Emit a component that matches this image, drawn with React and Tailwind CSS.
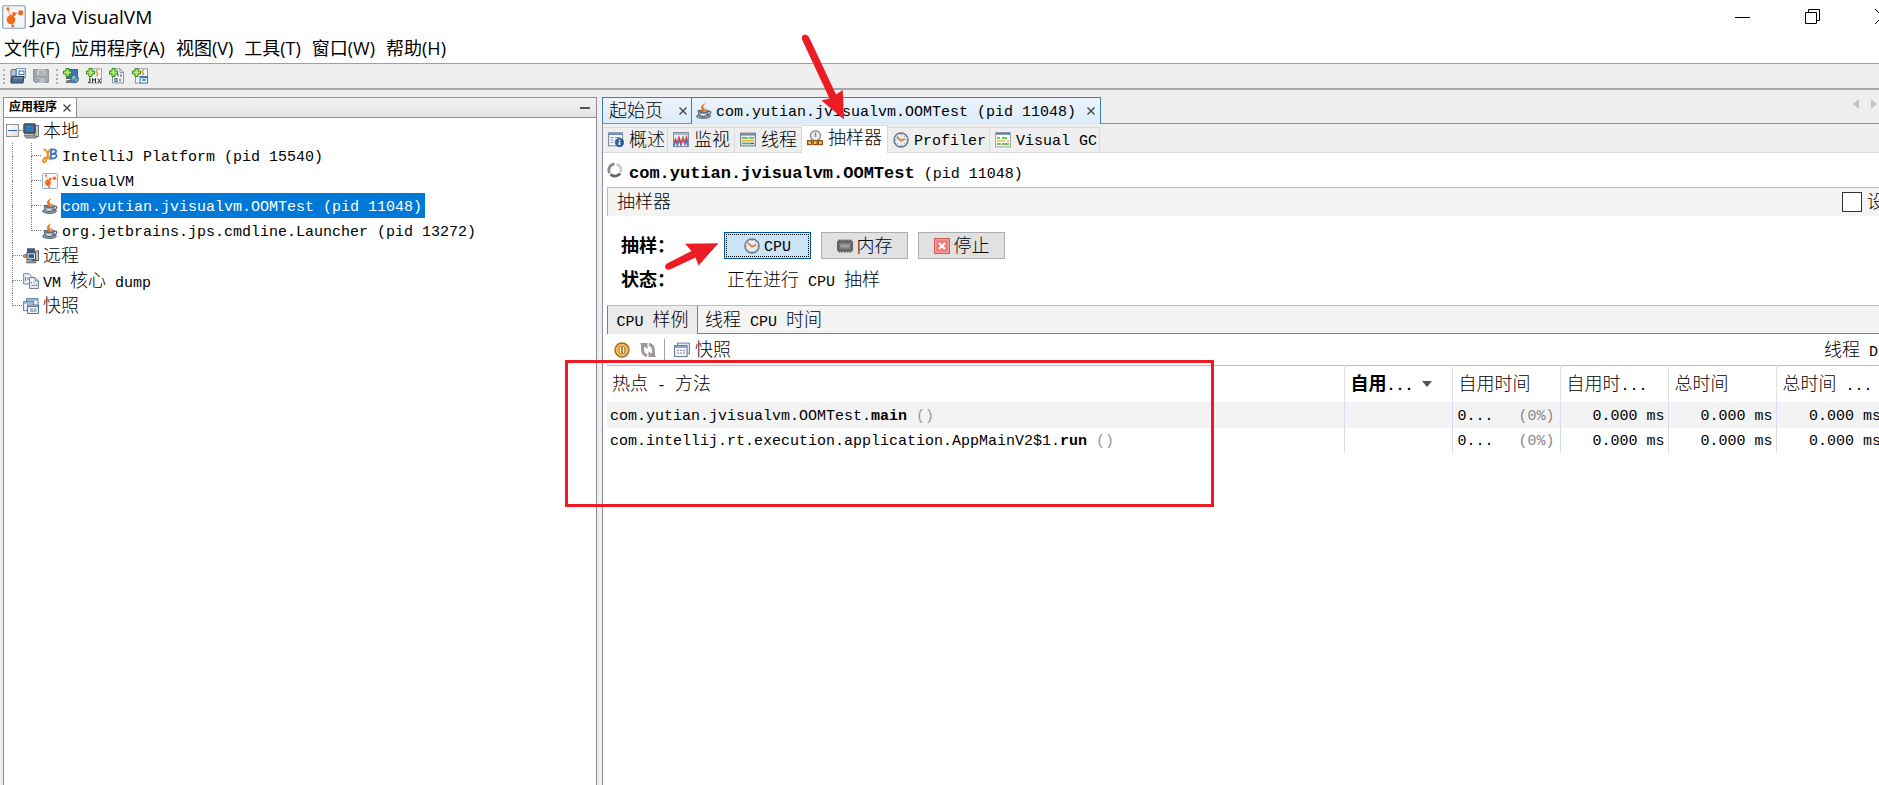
import React from "react";

const CJK = /([\u3000-\u303f\u4e00-\u9fff\uff00-\uffef]+)/;

/* Mixed text: full-width characters take twice the advance of the Latin ones. */
function T({ children, className = "", latin = "text-[15px]" }) {
  return (
    <span className={"inline-block pt-[4px] whitespace-pre " + className}>
      {children.split(CJK).map((part, i) =>
        part === "" ? null : (
          <span key={i} className={i % 2 ? "text-[18px]" : latin}>
            {part}
          </span>
        )
      )}
    </span>
  );
}

const Svg = ({ size = 16, children, className = "" }) => (
  <svg viewBox="0 0 16 16" width={size} height={size} className={"shrink-0 " + className} aria-hidden="true">
    {children}
  </svg>
);

const Plus = () => <path d="M3 .5h3v2.500h2.500v3H6v2.500H3V6H.5V3H3z" fill="#b5e67c" stroke="#2c8a12" />;

const LogoIcon = ({ size }) => (
  <Svg size={size}>
    <rect x=".5" y=".5" width="15" height="15" rx="1" fill="#f4f6f9" stroke="#7f9db9" strokeWidth=".8" />
    <path d="M4 2.800l1.500 4L6 9.500l.8 4M6 9.500L8.500 6l4-1" stroke="#f7a46b" strokeWidth=".7" fill="none" />
    <circle cx="4" cy="2.600" r="1.100" fill="#f26a1b" />
    <circle cx="8" cy="6" r="1.300" fill="#f26a1b" />
    <circle cx="12.500" cy="5.200" r="1.700" fill="#f26a1b" />
    <ellipse cx="6" cy="9.800" rx="2.900" ry="3.100" fill="#f26a1b" />
    <circle cx="7.200" cy="14" r="1" fill="#f26a1b" />
  </Svg>
);
const OpenIcon = () => (
  <Svg>
    <path d="M1 14V3q0-1.500 1.500-1.500H6V8H2z" fill="#b8c4d4" stroke="#5b6b80" />
    <rect x="6.500" y=".5" width="9" height="9" fill="#eaf2fb" stroke="#7d9cc4" />
    <rect x="9" y="3" width="5" height="3.500" fill="#fff" stroke="#3b6fb5" />
    <path d="M2.500 8.500H14L13 15H1z" fill="#4f6f96" stroke="#2c425f" />
    <path d="M3.500 10h9" stroke="#8ba6c8" />
  </Svg>
);
const SaveIcon = () => (
  <Svg>
    <path d="M.5 1.500h15v13H2L.5 13z" fill="#a3a7ad" stroke="#8f949b" />
    <rect x="4" y="1.500" width="8.500" height="6" fill="#c6c9ce" />
    <path d="M6 4h5M6 6h5" stroke="#9b9fa6" />
    <rect x="4" y="10" width="8" height="5" fill="#bcc0c5" />
    <path d="M5.500 11v3" stroke="#878c93" strokeWidth="1.500" />
  </Svg>
);
const AddRemote = () => (
  <Svg>
    <rect x="3.500" y="1.500" width="11" height="9" fill="#3b78b4" stroke="#5a5f66" />
    <path d="M4 12.500h6v2H3z" fill="#777c83" stroke="#55595f" strokeWidth=".7" />
    <circle cx="11.500" cy="11" r="4" fill="#4d86c4" stroke="#37618f" strokeWidth=".7" />
    <path d="M9 9q2-2 3-.5T10 12zM12.500 11l2 .5-1.500 2.500z" fill="#8fd08a" />
    <Plus />
  </Svg>
);
const AddJmx = () => (
  <Svg>
    <rect x="3.500" y=".8" width="12" height="14.200" fill="#f5f7fa" stroke="#98a5b5" />
    <path d="M12 1.500q-3 2-1 3.500T10 8" stroke="#ee8a2c" strokeWidth="1.300" fill="none" />
    <path d="M2 14.500h2V10M6.500 15v-4.500l1.500 2 1.500-2V15M11.500 10.500l3.500 4.500M15 10.500L11.500 15" stroke="#333" strokeWidth="1" fill="none" />
    <Plus />
  </Svg>
);
const AddDump = () => (
  <Svg>
    <path d="M3.500 .8H11L14.500 4.500V15h-11z" fill="#f2f5f9" stroke="#8593a5" />
    <path d="M11 .8V4.500h3.500" fill="none" stroke="#8593a5" />
    <path d="M9 5.500v3M12 6v3M6 10.500h2v3H6zM11 10.500v3" stroke="#56606d" strokeWidth="1.100" fill="none" />
    <Plus />
  </Svg>
);
const AddSnap = () => (
  <Svg>
    <rect x="3.500" y=".8" width="12" height="14.200" fill="#f2f5f9" stroke="#8b99ab" />
    <path d="M12 1.500q-3 2-1 3.500T10 7" stroke="#ee8a2c" strokeWidth="1.300" fill="none" />
    <rect x="8" y="8.500" width="7.500" height="6.500" fill="#fff" stroke="#3f76bd" />
    <path d="M8 9.500h7.500M10 12h4" stroke="#3f76bd" strokeWidth="1.500" />
    <Plus />
  </Svg>
);
const LocalIcon = () => (
  <Svg>
    <rect x="11" y="2.500" width="4.500" height="11" fill="#c9ccd0" stroke="#70757c" />
    <rect x=".7" y=".7" width="11.800" height="9.800" rx="1" fill="#4a4f56" stroke="#5b6067" />
    <rect x="2.300" y="2.300" width="8.500" height="6.500" fill="#2f7abf" />
    <path d="M1 12h11l1.500 3H3z" fill="#9b9fa5" stroke="#62676e" strokeWidth=".8" />
    <path d="M13 11.500h1" stroke="#49b52b" />
  </Svg>
);
const JbIcon = () => (
  <Svg>
    <path d="M7.500 1.500L4 12.500q-1 2.500-2.500 1.500T3 9.500l4 .5M1.500 1.500q3 0 4 4T8.500 12" stroke="#f0932b" strokeWidth="2" fill="none" />
    <path d="M9 10.500V1.500h2.500q3 0 2.500 2.300T10 6q5-.5 4.500 2.200T9 10.500z" stroke="#3e74c0" strokeWidth="1.800" fill="none" />
  </Svg>
);
const JavaIcon = () => (
  <Svg>
    <ellipse cx="7.500" cy="13.200" rx="7" ry="2.300" fill="#8d9aa8" stroke="#4c5866" strokeWidth=".8" />
    <path d="M2 7.500h10.500q0 5-3.500 6H5.500q-3.500-1-3.500-6z" fill="#a9b6c5" stroke="#4c5866" strokeWidth=".9" />
    <path d="M12.300 8.500q3-.8 2.500 1.200T11 12" fill="none" stroke="#4c5866" strokeWidth="1.100" />
    <path d="M2.800 8.300h9q-.5 1.500-1.500 2H4.500q-1.200-.6-1.700-2z" fill="#5c6c80" />
    <path d="M5 11.800h4" stroke="#e4eaf1" strokeWidth="1.200" />
    <path d="M9.500 0Q3.500 3 5.300 6T7 9.500Q9.800 7.500 8 5.500T9.500 0z" fill="#e97618" />
    <path d="M11.500 3Q7.500 5 8.500 9.300q3.700-2.300 1.800-3.500T11.500 3z" fill="#f39b4a" />
  </Svg>
);
const RemoteIcon = () => (
  <Svg>
    <rect x="9.500" y="3" width="6" height="9.500" fill="#c8ccd1" stroke="#555a61" />
    <rect x="4.500" y=".8" width="7" height="5" fill="#2e5f96" stroke="#565b62" />
    <rect x="4" y="4.800" width="8.500" height="6.500" fill="#fff" stroke="#4a4f56" strokeWidth="1.200" />
    <rect x="5.500" y="6.200" width="5.500" height="3.700" fill="#245a9c" />
    <path d="M3.500 12.800h9.500V15H3.500z" fill="#8e9399" stroke="#5d6269" strokeWidth=".6" />
    <path d="M1.800 8H4" stroke="#6e5320" />
    <circle cx="1.800" cy="8" r="1.500" fill="#e2a93b" stroke="#6e5320" strokeWidth=".8" />
    <path d="M10 14h1.500" stroke="#49b52b" />
  </Svg>
);
const CoreIcon = () => (
  <Svg>
    <path d="M.6.6h5.500L9 3.500V11H.6z" fill="#e6ecf3" stroke="#7787a0" />
    <path d="M6.600 4.600H12L15.400 8v7.400H6.600z" fill="#f0f4f8" stroke="#66768e" />
    <path d="M12 4.600V8h3.400M2.500 4v4M5 4v3M8.500 9v1.500M11 9v1.500M8.500 12.500h4M13.500 11v2" stroke="#66768e" fill="none" strokeWidth=".9" />
  </Svg>
);
const SnapsIcon = () => (
  <Svg>
    <rect x="3.500" y=".6" width="11.500" height="8" fill="#eef3fa" stroke="#5b80b5" />
    <path d="M4 2h11" stroke="#5b80b5" />
    <rect x=".6" y="3.600" width="10" height="9" fill="#eef3fa" stroke="#5b80b5" />
    <path d="M1 5h9" stroke="#5b80b5" />
    <rect x="4.600" y="7" width="10.800" height="8.400" fill="#f8fafd" stroke="#47689a" />
    <path d="M5 8.500h10M7 11h3M11 11h2.500M7 13h6.500" stroke="#5f6f86" />
  </Svg>
);
const OverviewIcon = () => (
  <Svg>
    <rect x=".6" y=".8" width="14" height="13" fill="#f5f7fa" stroke="#76879d" />
    <path d="M1 2h13" stroke="#6b90c4" strokeWidth="2" />
    <path d="M2.500 5.500h3M2.500 8h3M2.500 10.500h3M7 5.500h5.500M7 8h1" stroke="#8c96a3" />
    <circle cx="11.500" cy="10.500" r="4.200" fill="#2f5f9f" stroke="#1e4276" strokeWidth=".6" />
    <path d="M11.500 7.700v1.300M11.500 9.800v3.300" stroke="#fff" strokeWidth="1.600" />
  </Svg>
);
const MonitorIcon = () => (
  <Svg>
    <rect x=".6" y=".6" width="14.800" height="14" fill="#edf1f6" stroke="#76879d" />
    <path d="M1 2h14" stroke="#93a7c0" strokeWidth="1.500" />
    <path d="M1 14L2.500 8l2 5 1.500-6 2 6 2-7 2 6 1-5 2 7" stroke="#3f78c6" fill="none" strokeWidth="1.500" />
    <path d="M1 10l1.500-3 1.500 4L6 5l2 6 2-5 1.500 5 2-6 1.500 5" stroke="#d94a4a" fill="none" strokeWidth="1.300" />
  </Svg>
);
const ThreadsIcon = () => (
  <Svg>
    <rect x=".6" y="1.100" width="14.800" height="12.800" fill="#e9edf1" stroke="#697687" />
    <path d="M1 2.500h14" stroke="#75869b" strokeWidth="2" />
    <path d="M2 6h5M10 6h4M2 11.500h9" stroke="#49b548" strokeWidth="1.500" />
    <path d="M7 6h3M2 8.800h12" stroke="#e3b436" strokeWidth="1.500" />
    <path d="M11 11.500h3" stroke="#555" strokeWidth="1.300" />
  </Svg>
);
const SamplerIcon = () => (
  <Svg>
    <circle cx="8.500" cy="5.700" r="5" fill="#e7edf5" stroke="#7b8898" strokeWidth="1.300" />
    <path d="M8.500 2.200V7" stroke="#e0772a" strokeWidth="1.500" />
    <path d="M4.400 12.500h7.200" stroke="#6b4a16" />
    <rect x=".6" y="10.600" width="4" height="4" fill="#f3ba50" stroke="#8a5210" strokeWidth="1.200" />
    <rect x="6.200" y="10.600" width="4" height="4" fill="#f3ba50" stroke="#8a5210" strokeWidth="1.200" />
    <rect x="11.400" y="10.600" width="4" height="4" fill="#f3ba50" stroke="#8a5210" strokeWidth="1.200" />
  </Svg>
);
const ClockIcon = () => (
  <Svg>
    <circle cx="8" cy="8" r="7" fill="#e3edf7" stroke="#6d7681" strokeWidth="1.500" />
    <path d="M8 2v1M8 13v1M2 8h1M13 8h1M3.800 3.800l.7.7M11.500 11.500l.7.7M3.800 12.200l.7-.7M12.200 3.800l-.7.7" stroke="#7d8792" />
    <path d="M3.800 4.800l4.200 4 4-2" stroke="#e5762a" strokeWidth="1.700" fill="none" />
  </Svg>
);
const GcIcon = () => (
  <Svg>
    <rect x=".6" y=".6" width="14.800" height="14.300" fill="#fdfdfd" stroke="#9aa0a8" />
    <path d="M1 1.700h14" stroke="#557ba9" strokeWidth="2" />
    <path d="M2 6h3M7 6h5" stroke="#23c423" strokeWidth="1.500" />
    <path d="M2 9h8M12 9h2" stroke="#e9c22f" strokeWidth="1.500" />
    <path d="M2 12h4M9 12h5" stroke="#23c423" strokeWidth="1.500" />
    <path d="M7 12h2" stroke="#e04343" strokeWidth="1.500" />
  </Svg>
);
const SpinnerIcon = () => (
  <Svg>
    <path d="M2.600 11A6.200 6.200 0 0 1 7.500 1.900" stroke="#85898e" strokeWidth="2.800" fill="none" />
    <path d="M9.500 2A6.200 6.200 0 0 1 13.700 10" stroke="#c9cccf" strokeWidth="2.800" fill="none" />
    <path d="M13.200 11.200A6.200 6.200 0 0 1 3.500 12.300" stroke="#63676c" strokeWidth="2.800" fill="none" />
  </Svg>
);
const ChipIcon = () => (
  <Svg>
    <path d="M2.500 1.500v13M5.250 1.500v13M8 1.500v13M10.750 1.500v13M13.500 1.500v13" stroke="#6a6a6a" strokeWidth="1.800" />
    <rect x=".6" y="3" width="14.800" height="10" rx="1" fill="#6d6d6d" stroke="#555" />
    <rect x="3" y="5.500" width="10" height="5" fill="#8b8b8b" />
    <path d="M4 8h8" stroke="#b7b7b7" />
  </Svg>
);
const StopIcon = () => (
  <Svg>
    <rect x=".6" y=".6" width="14.800" height="14.800" fill="#ee7b7b" stroke="#cf4f4f" />
    <rect x="1.700" y="1.700" width="12.600" height="12.600" fill="none" stroke="#f6abab" />
    <path d="M5 5l6 6M11 5l-6 6" stroke="#fff" strokeWidth="2" />
  </Svg>
);
const PauseIcon = () => (
  <Svg>
    <circle cx="8" cy="8" r="7" fill="#eda63f" stroke="#a36a1c" strokeWidth="1.300" />
    <circle cx="8" cy="8" r="5.300" fill="none" stroke="#f7cf8f" />
    <path d="M6.300 4.500v7M9.700 4.500v7" stroke="#8d5a12" strokeWidth="2.400" />
    <path d="M6.300 5v6M9.700 5v6" stroke="#fff" strokeWidth="1.300" />
  </Svg>
);
const RefreshIcon = () => (
  <Svg>
    <path d="M7 13.800Q2.500 12.500 2.500 7V3" stroke="#9b9b9b" strokeWidth="3" fill="none" />
    <path d="M0 1h7.500v6L5 4.800 2.500 6z" fill="#9b9b9b" />
    <path d="M9 2.200Q13.500 3.500 13.500 9v4" stroke="#9b9b9b" strokeWidth="3" fill="none" />
    <path d="M16 15H8.500V9l2.500 2.200L13.500 10z" fill="#9b9b9b" />
  </Svg>
);
const SnapshotIcon = () => (
  <Svg>
    <rect x="3.500" y="1.100" width="12" height="10.500" fill="#dfe8f2" stroke="#6e86a5" />
    <rect x=".6" y="3.600" width="12.500" height="11" fill="#f6f8fb" stroke="#5d728f" />
    <path d="M1 5h12" stroke="#7f9cc2" strokeWidth="1.800" />
    <path d="M3 8.500h2M6 8.500h2M9 8.500h2M3 11h2M6 11h2M9 11h2" stroke="#7f8fa5" />
  </Svg>
);
const CloseX = () => (
  <svg viewBox="0 0 8 8" width="8" height="8" className="block shrink-0" aria-hidden="true">
    <path d="M.5.5l7 7M7.500.5l-7 7" stroke="#444" strokeWidth="1.300" />
  </svg>
);

const Grip = () => <span className="h-[15px] border-l-2 border-dotted border-[#b0b0b0]" />;

function Branch({ line = true, stub = true, last = false }) {
  return (
    <span className="flex h-full w-[19px] shrink-0 flex-col pl-[8px]">
      <span
        className={
          "h-[13px] w-[10px] border-dotted border-[#808080] " + (line ? "border-l " : "") + (stub ? "border-b" : "")
        }
      />
      <span className={"h-[12px] w-[10px] border-dotted border-[#808080] " + (line && !last ? "border-l" : "")} />
    </span>
  );
}

function Leaf({ icon: Icon, children, last, selected, root }) {
  return (
    <li className="flex h-[25px] items-center">
      {!root && <Branch stub={false} />}
      <Branch last={last} />
      <button type="button" className="flex h-full items-center gap-[3px]">
        <Icon />
        <span className={"flex h-full items-center pr-[3px] pl-px " + (selected ? "bg-[#0078d7] text-white" : "")}>
          <T>{children}</T>
        </span>
      </button>
    </li>
  );
}

const SUB_TABS = [
  ["概述", OverviewIcon, "w-[65px]"],
  ["监视", MonitorIcon, "w-[67px]"],
  ["线程", ThreadsIcon, "w-[67px]"],
  ["抽样器", SamplerIcon, "w-[86px]"],
  ["Profiler", ClockIcon, "w-[102px]"],
  ["Visual GC", GcIcon, "w-[110px]"],
];

const ROWS = [
  ["com.yutian.jvisualvm.OOMTest.", "main"],
  ["com.intellij.rt.execution.application.AppMainV2$1.", "run"],
];

const HEAD = ["自用时间", "自用时...", "总时间", "总时间 ..."];

const BTN = "flex h-[27px] w-[87px] items-center justify-center gap-[4px] border";

export default function App() {
  return (
    <div className="relative flex min-h-screen flex-col overflow-hidden bg-[#efefef] font-['Liberation_Mono','Noto_Sans_CJK_SC',monospace] text-[15px] leading-[20px] font-light text-black">
      <header className="bg-white font-['Open_Sans','Noto_Sans_CJK_SC',sans-serif] font-normal">
        <div className="flex h-[33px] items-center pl-[2px]">
          <LogoIcon size={24} />
          <h1 className="pl-[5px] text-[19px]">Java VisualVM</h1>
          <div className="-mr-[12px] ml-auto flex items-center gap-[54px]">
            <button type="button" aria-label="Minimize">
              <svg width="16" height="16" className="block"><path d="M0 8.500h15" stroke="#000" /></svg>
            </button>
            <button type="button" aria-label="Restore">
              <svg width="16" height="16" className="block">
                <path d="M.5 3.500h11v11H.5zM3.500 3.500v-3h11v11h-3" fill="none" stroke="#000" />
              </svg>
            </button>
            <button type="button" aria-label="Close">
              <svg width="16" height="16" className="block"><path d="M0 0l15 15M15 0L0 15" stroke="#000" /></svg>
            </button>
          </div>
        </div>
        <nav className="flex h-[30px] items-center gap-[11px] pl-[4px]">
          {["文件(F)", "应用程序(A)", "视图(V)", "工具(T)", "窗口(W)", "帮助(H)"].map((m) => (
            <button type="button" key={m} className="text-[18px]">{m}</button>
          ))}
        </nav>
      </header>

      <div className="flex h-[27px] items-center border-t border-b-2 border-t-[#a0a0a0] border-b-[#a8a8a8] pl-[3px]">
        <Grip />
        <button type="button" aria-label="Open" className="ml-[5px]"><OpenIcon /></button>
        <button type="button" aria-label="Save" disabled className="mr-[7px] ml-[7px]"><SaveIcon /></button>
        <Grip />
        <div className="ml-[5px] flex gap-[7px]">
          <button type="button" aria-label="Add remote host"><AddRemote /></button>
          <button type="button" aria-label="Add JMX connection"><AddJmx /></button>
          <button type="button" aria-label="Add VM core dump"><AddDump /></button>
          <button type="button" aria-label="Add snapshot"><AddSnap /></button>
        </div>
      </div>

      <div className="flex grow gap-[5px] pt-[7px] pl-[3px]">
        <aside className="flex w-[594px] shrink-0 flex-col border border-b-0 border-[#8c8e99] bg-white">
          <div className="flex h-[20px] items-center border-b border-[#8c8e99] bg-linear-to-b from-[#f2f2f2] to-[#e4e4e4]">
            <div className="flex h-full w-[73px] items-center justify-between border-r border-[#8c8e99] bg-white pr-[5px] pl-[5px]">
              <span className="text-[12px] font-bold">应用程序</span>
              <button type="button" aria-label="Close panel"><CloseX /></button>
            </div>
            <button type="button" aria-label="Minimize panel" className="mr-[6px] ml-auto h-[2px] w-[10px] bg-[#555]" />
          </div>
          <ul>
            <li>
              <div className="flex h-[25px] items-center">
                <button type="button" aria-label="Collapse" className="ml-[2px] flex size-[13px] items-center justify-center border border-[#919191] bg-linear-to-br from-white to-[#dedede]">
                  <span className="h-px w-[9px] bg-[#2f5fb0]" />
                </button>
                <span className="w-[4px] border-t border-dotted border-[#808080]" />
                <LocalIcon />
                <T className="pl-[4px]">本地</T>
              </div>
              <ul>
                <Leaf icon={JbIcon}>IntelliJ Platform (pid 15540)</Leaf>
                <Leaf icon={LogoIcon}>VisualVM</Leaf>
                <Leaf icon={JavaIcon} selected>com.yutian.jvisualvm.OOMTest (pid 11048)</Leaf>
                <Leaf icon={JavaIcon} last>org.jetbrains.jps.cmdline.Launcher (pid 13272)</Leaf>
              </ul>
            </li>
            <Leaf root icon={RemoteIcon}>远程</Leaf>
            <Leaf root icon={CoreIcon}>VM 核心 dump</Leaf>
            <Leaf root icon={SnapsIcon} last>快照</Leaf>
          </ul>
        </aside>

        <main className="flex min-w-0 grow flex-col border-l border-[#8c8e99]">
          <div className="-ml-px flex h-[27px]">
            <div className="flex w-[90px] items-center justify-between border border-[#3c7fb1] border-b-[#8c8e99] bg-linear-to-b from-[#ecf4fc] to-[#dcebfa] pr-[4px] pl-[6px]">
              <button type="button"><T>起始页</T></button>
              <button type="button" aria-label="Close tab"><CloseX /></button>
            </div>
            <div className="flex w-[409px] items-center border-t border-r border-[#3c7fb1] bg-linear-to-b from-[#ecf4fc] to-[#dcecfb] pr-[5px] pl-[4px]">
              <button type="button" className="flex items-center gap-[4px]">
                <JavaIcon />
                <T>com.yutian.jvisualvm.OOMTest (pid 11048)</T>
              </button>
              <button type="button" aria-label="Close tab" className="ml-auto"><CloseX /></button>
            </div>
            <div className="flex grow items-start justify-end gap-[12px] border-b border-[#8c8e99] pt-[2px] pr-[2px]">
              <button type="button" aria-label="Scroll left"><svg width="6" height="10" className="block"><path d="M6 0v10L0 5z" fill="#c3c3c3" /></svg></button>
              <button type="button" aria-label="Scroll right"><svg width="6" height="10" className="block"><path d="M0 0v10l6-5z" fill="#c3c3c3" /></svg></button>
            </div>
          </div>

          <div className="flex h-[29px] items-end border-b border-[#dadada]">
            {SUB_TABS.map(([label, Icon, width]) => (
              <button
                type="button"
                key={label}
                className={
                  "flex items-center gap-[5px] border-t border-r border-[#dadada] pl-[5px] " + width +
                  (label === "抽样器" ? " -mb-px h-[28px] bg-white pb-[3px]" : " h-[25px]")
                }
              >
                <Icon />
                <T>{label}</T>
              </button>
            ))}
          </div>

          <div className="flex grow flex-col bg-white pl-[4px]">
            <div className="flex h-[34px] items-center gap-[6px]">
              <SpinnerIcon />
              <h2 className="flex items-baseline pt-[4px]">
                <T className="font-bold" latin="text-[17px]">com.yutian.jvisualvm.OOMTest</T>
                <T> (pid 11048)</T>
              </h2>
            </div>

            <div className="flex h-[29px] items-center border-t border-l border-[#bcbcbc] bg-[#f4f4f4] pl-[9px]">
              <T>抽样器</T>
              <label className="-mr-[24px] ml-auto flex items-center gap-[5px]">
                <input type="checkbox" className="size-[20px] appearance-none border border-[#333] bg-white" />
                <T>设置</T>
              </label>
            </div>

            <div className="flex h-[89px] flex-col gap-[9px] pt-[16px] pl-[14px]">
              <div className="flex h-[27px] items-center">
                <T className="w-[103px] font-bold">抽样：</T>
                <div className="flex gap-[10px]">
                  <button type="button" className={BTN + " border-[#005499] bg-[#cce4f7] outline-1 -outline-offset-3 outline-dotted outline-black"}><ClockIcon /><T>CPU</T></button>
                  <button type="button" className={BTN + " border-[#adadad] bg-[#e1e1e1]"}><ChipIcon /><T>内存</T></button>
                  <button type="button" className={BTN + " border-[#adadad] bg-[#e1e1e1]"}><StopIcon /><T>停止</T></button>
                </div>
              </div>
              <div className="flex h-[24px] items-center">
                <T className="w-[106px] font-bold">状态：</T>
                <T>正在进行 CPU 抽样</T>
              </div>
            </div>

            <div className="flex h-[29px] border-t border-[#bcbcbc] bg-[#f4f4f4]">
              <button type="button" className="w-[91px] border-r border-l border-[#808080] bg-[#ebebeb]"><T>CPU 样例</T></button>
              <div className="flex grow border-b border-[#808080] pl-[7px]">
                <button type="button"><T>线程 CPU 时间</T></button>
              </div>
            </div>

            <div className="flex h-[31px] items-center pl-[7px]">
              <button type="button" aria-label="Pause"><PauseIcon /></button>
              <button type="button" aria-label="Refresh" disabled className="ml-[10px]"><RefreshIcon /></button>
              <span className="mr-[9px] ml-[8px] h-[22px] w-px bg-[#a0a0a0]" />
              <button type="button" className="flex items-center gap-[5px]"><SnapshotIcon /><T>快照</T></button>
              <button type="button" className="-mr-[26px] ml-auto"><T>线程 Dump</T></button>
            </div>

            <table className="-mr-[5px] table-fixed border-collapse border-t border-[#bcbcbc] text-left">
              <colgroup>
                <col />
                <col className="w-[108px]" /><col className="w-[108px]" /><col className="w-[108px]" />
                <col className="w-[108px]" /><col className="w-[108px]" />
              </colgroup>
              <thead>
                <tr className="h-[36px]">
                  <th className="pl-[5px] font-light"><T>热点 - 方法</T></th>
                  <th className="border-l border-[#e0e0e0] pl-[6px]">
                    <span className="flex items-center gap-[8px]">
                      <T>自用...</T>
                      <svg width="10" height="6" aria-hidden="true"><path d="M0 0h10L5 6z" fill="#555" /></svg>
                    </span>
                  </th>
                  {HEAD.map((h) => (
                    <th key={h} className="border-l border-[#e0e0e0] pl-[6px] font-light"><T>{h}</T></th>
                  ))}
                </tr>
              </thead>
              <tbody>
                {ROWS.map(([pkg, method], i) => (
                  <tr key={method} className={i === 0 ? "h-[26px] bg-[#f3f3f3]" : "h-[25px]"}>
                    <td className="pl-[3px]"><T>{pkg}</T><T className="font-bold">{method}</T><T className="text-[#999]"> ()</T></td>
                    <td className="border-l border-[#d3dcf5]" />
                    <td className="border-l border-[#d3dcf5] pr-[5px] pl-[5px]">
                      <span className="flex justify-between"><T>0...</T><T className="text-[#888]">(0%)</T></span>
                    </td>
                    {[0, 1, 2].map((c) => (
                      <td key={c} className="border-l border-[#d3dcf5] pr-[3px] text-right"><T>0.000 ms</T></td>
                    ))}
                  </tr>
                ))}
              </tbody>
            </table>
          </div>
        </main>
      </div>

      <div className="pointer-events-none absolute top-[360px] left-[565px] h-[147px] w-[649px] border-3 border-[#ed1c24]" />
      <svg className="pointer-events-none absolute top-0 left-0" width="1000" height="300" aria-hidden="true">
        <path d="M802 39.500Q801 35 805 34.500Q807.500 34.500 809 37L836 94.500L842.700 90L844 119.500L821.500 100.500L829.500 98.500z" fill="#ed1c24" />
        <path d="M667 263.500L691.500 251L685 243.800L718.500 243.300L698.500 265.500L695.500 257.500L670 269.500Q666 270.500 665 267Q665 264.800 667 263.500z" fill="#ed1c24" />
      </svg>
    </div>
  );
}
